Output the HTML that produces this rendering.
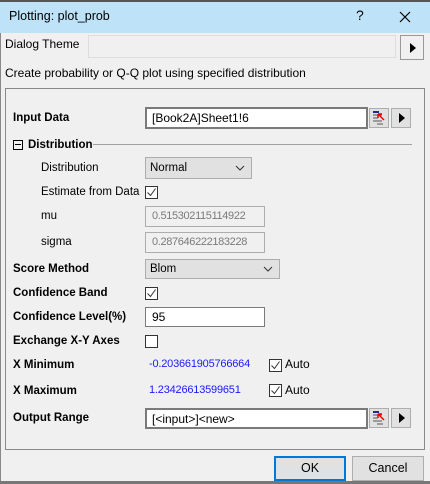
<!DOCTYPE html>
<html><head><style>
body{margin:0;width:430px;height:484px;background:#f0f0f0;position:relative;overflow:hidden;font-family:"Liberation Sans",sans-serif;font-size:12px;color:#000}
.a{position:absolute}
.l{position:absolute;font-weight:bold;font-size:11.5px;line-height:14px}
.n{position:absolute;font-size:11.5px;line-height:14px}
.box{position:absolute;background:#fff;border:1px solid #7a7a7a;box-sizing:border-box;font-size:12px;padding-left:6px;line-height:18px}
.dis{position:absolute;background:#f0f0f0;border:1px solid #adadad;box-sizing:border-box;color:#7a7a7a;font-size:11px;letter-spacing:-0.35px;padding-left:6px;line-height:19px;white-space:nowrap;overflow:hidden}
.cb{position:absolute;width:13px;height:13px;border:1px solid #333;box-sizing:border-box;background:#fff}
.combo{position:absolute;background:#e1e1e1;border:1px solid #adadad;box-sizing:border-box;font-size:11.5px;padding-left:4px;line-height:18px}
.btn{position:absolute;background:#e1e1e1;border:1px solid #adadad;box-sizing:border-box}
.tri{position:absolute;width:0;height:0;border-top:5px solid transparent;border-bottom:5px solid transparent;border-left:6px solid #000}
</style></head><body>
<div class="a" style="left:0;top:0;width:430px;height:2px;background:#555"></div>
<div class="a" style="left:0;top:2px;width:430px;height:31px;background:#bee3f9"></div>
<div class="n" style="left:9px;top:9px;font-size:12.5px">Plotting: plot_prob</div>
<div class="n" style="left:356px;top:8px;font-size:14px">?</div>
<svg class="a" style="left:399px;top:11px" width="12" height="12"><path d="M1 1L11 11M11 1L1 11" stroke="#000" stroke-width="1.2"/></svg>
<div class="a" style="left:0;top:33px;width:1px;height:451px;background:#888"></div>
<div class="n" style="left:5px;top:37px;font-size:12px">Dialog Theme</div>
<div class="a" style="left:88px;top:35px;width:308px;height:23px;border:1px solid #ddd;box-sizing:border-box;background:#f0f0f0"></div>
<div class="btn" style="left:400px;top:35px;width:24px;height:25px;background:#f0f0f0;border-color:#999"><div class="tri" style="left:9px;top:7px"></div></div>
<div class="n" style="left:5px;top:66px;font-size:12px">Create probability or Q-Q plot using specified distribution</div>
<div class="a" style="left:5px;top:88px;width:420px;height:362px;border:1px solid #888;box-sizing:border-box"></div>

<div class="l" style="left:13px;top:111px">Input Data</div>
<div class="box" style="left:145px;top:107px;width:223px;height:22px;border:2px solid #7a7a7a;padding-left:5px">[Book2A]Sheet1!6</div>
<div class="btn" style="left:369px;top:108px;width:20px;height:20px">
<svg width="18" height="18"><rect x="3" y="2" width="6" height="2" fill="#1a2a9a"/><path d="M3 6h9M3 9h5M3 12h9M7 15h6" stroke="#555"/><path d="M8 5l6 6M8 5v4M8 5h4" stroke="#e00" stroke-width="1.5"/></svg></div>
<div class="btn" style="left:391px;top:108px;width:20px;height:20px"><div class="tri" style="left:7px;top:4px"></div></div>

<div class="a" style="left:13px;top:140px;width:10px;height:10px;border:1px solid #000;box-sizing:border-box"><div class="a" style="left:1px;top:3px;width:6px;height:1px;background:#000"></div></div>
<div class="l" style="left:28px;top:138px">Distribution</div>
<div class="a" style="left:93px;top:144px;width:319px;height:1px;background:#a0a0a0"></div>

<div class="n" style="left:41px;top:161px">Distribution</div>
<div class="combo" style="left:145px;top:157px;width:107px;height:22px;line-height:20px">Normal<svg class="a" style="left:89px;top:7px" width="10" height="6"><path d="M1 1l4 4 4-4" stroke="#333" fill="none"/></svg></div>
<div class="n" style="left:41px;top:185px">Estimate from Data</div>
<div class="cb" style="left:145px;top:186px"><svg width="11" height="11"><path d="M1.5 5.5l3 3 5-7" stroke="#333" fill="none"/></svg></div>
<div class="n" style="left:41px;top:209px">mu</div>
<div class="dis" style="left:145px;top:206px;width:120px;height:21px">0.515302115114922</div>
<div class="n" style="left:41px;top:235px">sigma</div>
<div class="dis" style="left:145px;top:232px;width:120px;height:21px">0.287646222183228</div>

<div class="l" style="left:13px;top:262px">Score Method</div>
<div class="combo" style="left:145px;top:259px;width:135px;height:20px">Blom<svg class="a" style="left:117px;top:6px" width="10" height="6"><path d="M1 1l4 4 4-4" stroke="#333" fill="none"/></svg></div>
<div class="l" style="left:13px;top:286px">Confidence Band</div>
<div class="cb" style="left:145px;top:287px"><svg width="11" height="11"><path d="M1.5 5.5l3 3 5-7" stroke="#333" fill="none"/></svg></div>
<div class="l" style="left:13px;top:310px">Confidence Level(%)</div>
<div class="box" style="left:145px;top:307px;width:120px;height:20px">95</div>
<div class="l" style="left:13px;top:334px">Exchange X-Y Axes</div>
<div class="cb" style="left:145px;top:335px"></div>

<div class="l" style="left:13px;top:358px">X Minimum</div>
<div class="n" style="left:149px;top:357px;color:#1a1aff;font-size:11px;letter-spacing:-0.2px">-0.203661905766664</div>
<div class="cb" style="left:269px;top:359px"><svg width="11" height="11"><path d="M1.5 5.5l3 3 5-7" stroke="#333" fill="none"/></svg></div>
<div class="n" style="left:285px;top:357px;font-size:12px">Auto</div>
<div class="l" style="left:13px;top:384px">X Maximum</div>
<div class="n" style="left:149px;top:383px;color:#1a1aff;font-size:11px;letter-spacing:-0.2px">1.23426613599651</div>
<div class="cb" style="left:269px;top:384px"><svg width="11" height="11"><path d="M1.5 5.5l3 3 5-7" stroke="#333" fill="none"/></svg></div>
<div class="n" style="left:285px;top:383px;font-size:12px">Auto</div>

<div class="l" style="left:13px;top:411px">Output Range</div>
<div class="box" style="left:145px;top:408px;width:223px;height:21px;border:2px solid #7a7a7a;padding-left:5px">[&lt;input&gt;]&lt;new&gt;</div>
<div class="btn" style="left:369px;top:408px;width:20px;height:20px">
<svg width="18" height="18"><rect x="3" y="2" width="6" height="2" fill="#1a2a9a"/><path d="M3 6h9M3 9h5M3 12h9M7 15h6" stroke="#555"/><path d="M8 5l6 6M8 5v4M8 5h4" stroke="#e00" stroke-width="1.5"/></svg></div>
<div class="btn" style="left:391px;top:408px;width:20px;height:20px"><div class="tri" style="left:7px;top:4px"></div></div>

<div class="btn" style="left:274px;top:456px;width:72px;height:25px;border:2px solid #0078d7;text-align:center;line-height:21px;font-size:12.5px">OK</div>
<div class="btn" style="left:352px;top:456px;width:72px;height:25px;text-align:center;line-height:23px;font-size:12.5px">Cancel</div>
<div class="a" style="left:0;top:481px;width:430px;height:3px;background:#777"></div>
</body></html>
